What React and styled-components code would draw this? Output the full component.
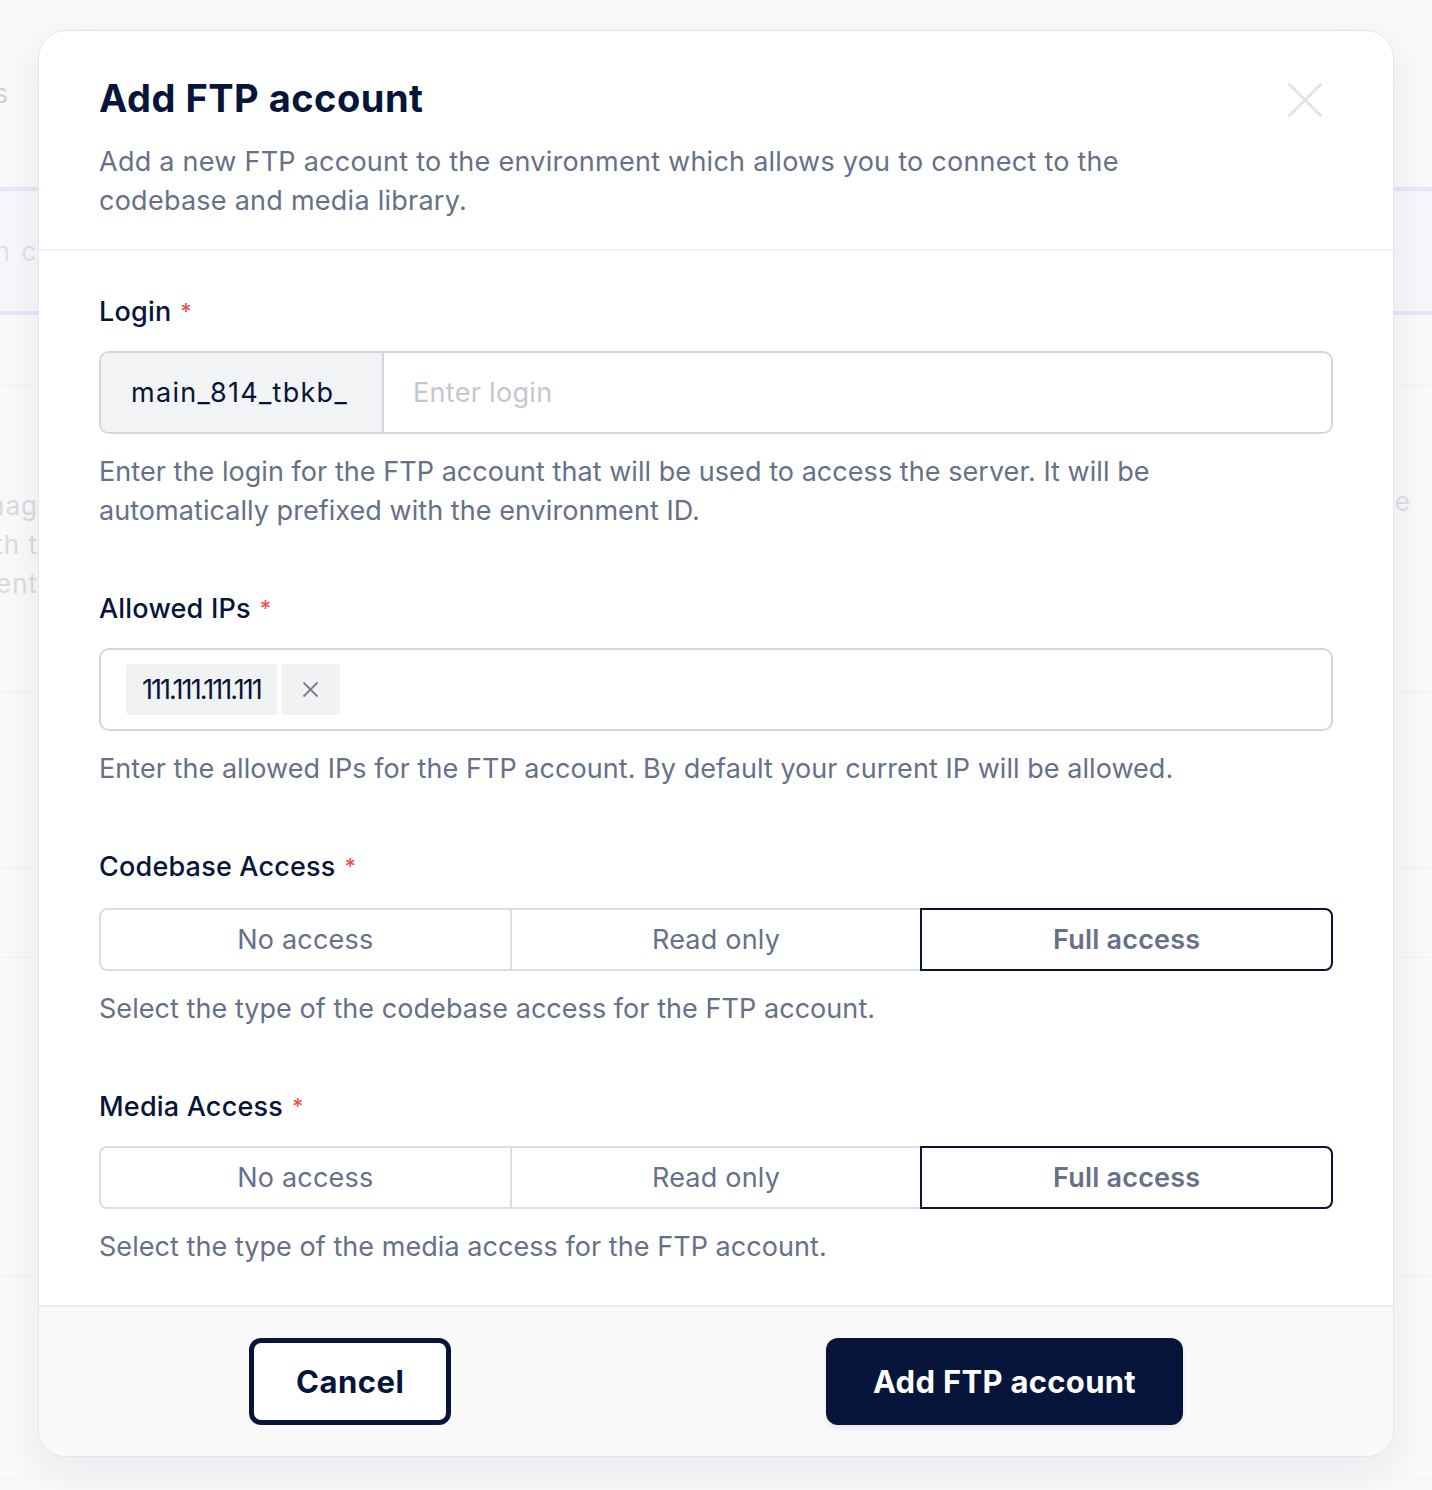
import React, { useState } from 'react'
import styled, { createGlobalStyle } from 'styled-components'

const NAVY = '#061539'
const MUTED = '#667089'

const GlobalStyle = createGlobalStyle`
  html, body {
    margin: 0;
    padding: 0;
  }

  body {
    font-family: Inter, 'Noto Sans', sans-serif;
    background: #f9f9fa;
    -webkit-font-smoothing: antialiased;
  }

  * {
    box-sizing: border-box;
  }
`

const Page = styled.div`
  position: relative;
  width: 1432px;
  height: 1490px;
  overflow: hidden;
  background: #f9f9fa;
`

/* faded page behind the dialog */

const BgColumn = styled.div`
  display: flex;
  flex-direction: column;
`

const BgRow = styled.div`
  height: ${p => p.$h}px;
  display: flex;
  justify-content: space-between;
  align-items: ${p => p.$align || 'center'};
  padding-top: ${p => p.$pt || 0}px;
  border-bottom: ${p => (p.$line ? '1px solid #efeff2' : 'none')};
`

const BgTabs = styled.div`
  height: 128px;
  display: flex;
  align-items: center;
  background: #f6f6fb;
  border-top: 4px solid #d9dcf7;
  border-bottom: 4px solid #d9dcf7;
`

const BgLines = styled.div`
  display: flex;
  flex-direction: column;
  margin-left: ${p => p.$shift || 0}px;
  width: ${p => p.$w || 300}px;
  text-align: right;
  font-size: 26px;
  line-height: 39px;
  color: ${p => p.$color || '#c9c9ce'};
  letter-spacing: ${p => p.$ls || 1}px;
  white-space: nowrap;
`

const BgRight = styled.span`
  font-size: 26px;
  color: #d2d2d6;
  margin-right: 22px;
`

/* dialog */

const Backdrop = styled.div`
  position: absolute;
  inset: 0;
  display: flex;
  justify-content: center;
  align-items: flex-start;
  padding-top: 30px;
  background: rgba(250, 250, 251, 0.35);
`

const Modal = styled.div`
  width: 1356px;
  background: #fff;
  border: 1px solid #e4e4e9;
  border-radius: 28px;
  box-shadow: 0 14px 40px rgba(16, 24, 40, 0.07);
  overflow: hidden;
`

const Header = styled.div`
  padding: 39px 60px 29px;
  border-bottom: 2px solid #efeff2;
`

const TitleRow = styled.div`
  display: flex;
  justify-content: space-between;
  align-items: center;
`

const Title = styled.h2`
  margin: 0;
  font-size: 38px;
  line-height: 48px;
  font-weight: 700;
  color: ${NAVY};
  letter-spacing: 0.5px;
`

const CloseButton = styled.button`
  width: 56px;
  height: 56px;
  display: flex;
  align-items: center;
  justify-content: center;
  border: none;
  background: transparent;
  padding: 4px 0 0;
  cursor: pointer;
`

const Description = styled.p`
  margin: 16px 0 0;
  max-width: 1060px;
  font-size: 27px;
  line-height: 39px;
  letter-spacing: 0.25px;
  color: ${MUTED};
`

const Body = styled.div`
  display: flex;
  flex-direction: column;
  gap: 59px;
  padding: 41px 60px 39px;
`

const Field = styled.div`
  display: flex;
  flex-direction: column;
`

const Label = styled.label`
  font-size: 27px;
  line-height: 39px;
  font-weight: 500;
  letter-spacing: 0.2px;
  color: ${NAVY};
  margin-bottom: ${p => p.$mb || 20}px;
`

const Required = styled.span`
  margin-left: 9px;
  color: #f0514c;
  font-size: 22px;
  vertical-align: top;
`

const Help = styled.p`
  margin: 18px 0 0;
  max-width: 1100px;
  font-size: 27px;
  line-height: 39px;
  letter-spacing: 0.05px;
  color: ${MUTED};
`

const InputBox = styled.div`
  height: 83px;
  display: flex;
  align-items: center;
  gap: ${p => p.$gap || 0}px;
  padding: 0 ${p => p.$px || 0}px;
  border: 2px solid #d3d6dc;
  border-radius: 10px;
  overflow: hidden;
  background: #fff;
`

const Prefix = styled.span`
  height: 100%;
  display: flex;
  align-items: center;
  padding: 0 34px 0 30px;
  background: #f2f3f5;
  border-right: 2px solid #d3d6dc;
  font-size: 27px;
  letter-spacing: 1.3px;
  color: ${NAVY};
`

const TextInput = styled.input`
  flex: 1;
  height: 100%;
  border: none;
  outline: none;
  padding: 0 29px;
  font-family: inherit;
  font-size: 27px;
  letter-spacing: 0.3px;
  color: ${NAVY};
  background: transparent;

  &::placeholder {
    color: #c3c7cf;
  }
`

const Tag = styled.span`
  height: 51px;
  display: flex;
  align-items: center;
  padding: 0 16px;
  background: #f1f2f4;
  border-radius: 4px;
  font-size: 27px;
  color: ${NAVY};
  letter-spacing: -1.95px;
`

const TagRemove = styled.button`
  width: 59px;
  height: 51px;
  display: flex;
  align-items: center;
  justify-content: center;
  padding: 0;
  border: none;
  border-radius: 4px;
  background: #f1f2f4;
  cursor: pointer;
`

const Segmented = styled.div`
  height: 63px;
  display: flex;
`

const Segment = styled.button`
  position: relative;
  flex: 1;
  margin-left: -2px;
  border: 2px solid ${p => (p.$active ? NAVY : '#dddde0')};
  background: #fff;
  font-family: inherit;
  font-size: 27px;
  letter-spacing: 0.2px;
  font-weight: ${p => (p.$active ? 600 : 400)};
  color: ${MUTED};
  z-index: ${p => (p.$active ? 1 : 0)};
  cursor: pointer;

  &:first-child {
    margin-left: 0;
    border-radius: 8px 0 0 8px;
  }

  &:last-child {
    border-radius: 0 8px 8px 0;
  }
`

const Footer = styled.div`
  display: flex;
  justify-content: space-between;
  align-items: center;
  padding: 31px 210px;
  background: #f9f9fa;
  border-top: 2px solid #ececf0;
`

const CancelButton = styled.button`
  height: 87px;
  padding: 0 42px;
  border: 5px solid ${NAVY};
  border-radius: 12px;
  background: #fff;
  font-family: inherit;
  font-size: 31px;
  font-weight: 700;
  letter-spacing: 0.5px;
  color: ${NAVY};
  cursor: pointer;
`

const PrimaryButton = styled.button`
  height: 87px;
  padding: 0 47px;
  border: none;
  border-radius: 12px;
  background: ${NAVY};
  box-shadow: 0 3px 5px rgba(6, 21, 57, 0.08);
  font-family: inherit;
  font-size: 31px;
  font-weight: 700;
  color: #fff;
  letter-spacing: 0.3px;
  cursor: pointer;
`

const CloseIcon = () => (
  <svg width="36" height="36" viewBox="0 0 36 36" fill="none">
    <path d="M1.5 1.5 L34.5 34.5 M34.5 1.5 L1.5 34.5" stroke="#e3e3e5" strokeWidth="3" />
  </svg>
)

const SmallX = () => (
  <svg width="17" height="17" viewBox="0 0 17 17" fill="none">
    <path d="M1.5 1.5 L15.5 15.5 M15.5 1.5 L1.5 15.5" stroke="#7b7f88" strokeWidth="1.8" />
  </svg>
)

const options = [
  { value: 'none', label: 'No access' },
  { value: 'read', label: 'Read only' },
  { value: 'full', label: 'Full access' }
]

const AccessPicker = ({ value, onChange }) => (
  <Segmented>
    {options.map(o => (
      <Segment key={o.value} $active={value === o.value} onClick={() => onChange(o.value)}>
        {o.label}
      </Segment>
    ))}
  </Segmented>
)

const Background = () => (
  <BgColumn>
    <BgRow $h={187}>
      <BgLines $shift={-291} $color="#b7b8bd">Accounts</BgLines>
    </BgRow>
    <BgTabs>
      <BgLines $shift={-262} $color="#cdd1f6" $ls={2}>Login c</BgLines>
    </BgTabs>
    <BgRow $h={71} $line />
    <BgRow $h={307} $line $align="flex-start" $pt={100}>
      <BgLines $shift={-262} $ls={1}>
        <span>Manag</span>
        <span>with t</span>
        <span>environment</span>
      </BgLines>
      <BgRight>e</BgRight>
    </BgRow>
    <BgRow $h={176} $line />
    <BgRow $h={89} $line />
    <BgRow $h={318} $line />
    <BgRow $h={203} $line />
  </BgColumn>
)

const App = () => {
  const [login, setLogin] = useState('')
  const [ips, setIps] = useState(['111.111.111.111'])
  const [codebase, setCodebase] = useState('full')
  const [media, setMedia] = useState('full')

  return (
    <Page>
      <GlobalStyle />
      <Background />
      <Backdrop>
        <Modal>
          <Header>
            <TitleRow>
              <Title>Add FTP account</Title>
              <CloseButton aria-label="Close">
                <CloseIcon />
              </CloseButton>
            </TitleRow>
            <Description>
              Add a new FTP account to the environment which allows you to connect to the codebase and media library.
            </Description>
          </Header>

          <Body>
            <Field>
              <Label>Login<Required>*</Required></Label>
              <InputBox>
                <Prefix>main_814_tbkb_</Prefix>
                <TextInput
                  placeholder="Enter login"
                  value={login}
                  onChange={e => setLogin(e.target.value)}
                />
              </InputBox>
              <Help>
                Enter the login for the FTP account that will be used to access the server. It will be automatically prefixed with the environment ID.
              </Help>
            </Field>

            <Field>
              <Label>Allowed IPs<Required>*</Required></Label>
              <InputBox $px={25} $gap={4}>
                {ips.map(ip => (
                  <React.Fragment key={ip}>
                    <Tag>{ip}</Tag>
                    <TagRemove onClick={() => setIps(ips.filter(i => i !== ip))}>
                      <SmallX />
                    </TagRemove>
                  </React.Fragment>
                ))}
              </InputBox>
              <Help>
                Enter the allowed IPs for the FTP account. By default your current IP will be allowed.
              </Help>
            </Field>

            <Field>
              <Label $mb={22}>Codebase Access<Required>*</Required></Label>
              <AccessPicker value={codebase} onChange={setCodebase} />
              <Help>Select the type of the codebase access for the FTP account.</Help>
            </Field>

            <Field>
              <Label $mb={20}>Media Access<Required>*</Required></Label>
              <AccessPicker value={media} onChange={setMedia} />
              <Help>Select the type of the media access for the FTP account.</Help>
            </Field>
          </Body>

          <Footer>
            <CancelButton>Cancel</CancelButton>
            <PrimaryButton>Add FTP account</PrimaryButton>
          </Footer>
        </Modal>
      </Backdrop>
    </Page>
  )
}

export default App
